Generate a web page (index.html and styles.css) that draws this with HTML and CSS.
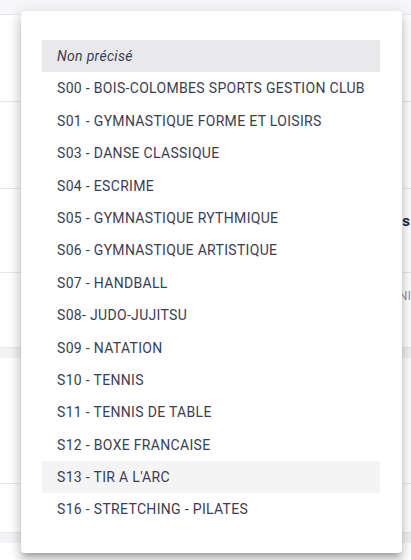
FILE: index.html
```html
<!DOCTYPE html>
<html lang="fr">
<head>
<meta charset="utf-8">
<link rel="stylesheet" href="styles.css">
</head>
<body>
<div class="page">
  <div class="topbar"></div>
  <div class="content">
    <div class="row r1"></div>
    <div class="row r2"></div>
    <div class="row r3"><span class="label">Classes</span></div>
    <div class="row r4"><span class="muted">NI</span></div>
    <div class="band"></div>
    <div class="row r5"></div>
    <div class="row r6"></div>
    <div class="band"></div>
  </div>
</div>
<div class="menu">
  <ul class="list">
    <li class="item selected"><em>Non précisé</em></li>
    <li class="item">S00 - BOIS-COLOMBES SPORTS GESTION CLUB</li>
    <li class="item">S01 - GYMNASTIQUE FORME ET LOISIRS</li>
    <li class="item">S03 - DANSE CLASSIQUE</li>
    <li class="item">S04 - ESCRIME</li>
    <li class="item">S05 - GYMNASTIQUE RYTHMIQUE</li>
    <li class="item">S06 - GYMNASTIQUE ARTISTIQUE</li>
    <li class="item">S07 - HANDBALL</li>
    <li class="item">S08- JUDO-JUJITSU</li>
    <li class="item">S09 - NATATION</li>
    <li class="item">S10 - TENNIS</li>
    <li class="item">S11 - TENNIS DE TABLE</li>
    <li class="item">S12 - BOXE FRANCAISE</li>
    <li class="item hover">S13 - TIR A L'ARC</li>
    <li class="item">S16 - STRETCHING - PILATES</li>
  </ul>
</div>
</body>
</html>
```

FILE: styles.css
```css
html, body {
  margin: 0;
  padding: 0;
  width: 411px;
  height: 560px;
  overflow: hidden;
  background: #ffffff;
  font-family: Roboto, "Noto Sans", sans-serif;
}
.page {
  position: relative;
  height: 560px;
}
.topbar {
  height: 14px;
  background: #f7f7f9;
  border-bottom: 1px solid #e6e6ee;
}
.row {
  border-bottom: 1px solid #e8e8ec;
  box-sizing: border-box;
}
.r1 { height: 87px; }
.r2 { height: 87px; }
.r3 { height: 84px; display: flex; align-items: center; justify-content: flex-end; }
.r4 { height: 75px; display: flex; align-items: flex-start; justify-content: flex-end; padding-top: 15px; }
.r5 { height: 126px; }
.r6 { height: 49px; }
.band { height: 10px; background: #f3f3f5; }
.label {
  font-weight: 700;
  font-size: 15px;
  color: #1f2340;
  margin-top: -20px;
  margin-right: 1px;
}
.muted {
  font-size: 13px;
  color: #9a9aa6;
  margin-right: 0;
}
.menu {
  position: absolute;
  left: 21px;
  top: 11px;
  width: 381px;
  height: 542px;
  background: #ffffff;
  border-radius: 4px;
  box-shadow: 0 5px 5px -3px rgba(0,0,0,0.2), 0 8px 10px 1px rgba(0,0,0,0.14), 0 3px 14px 2px rgba(0,0,0,0.12);
  box-sizing: border-box;
  padding: 29px 22px 0 21px;
}
.list {
  list-style: none;
  margin: 0;
  padding: 0;
}
.item {
  height: 32.4px;
  line-height: 32.4px;
  padding-left: 15px;
  font-size: 14px;
  letter-spacing: 0.32px;
  color: #3b3d52;
  white-space: nowrap;
}
.item em {
  font-style: italic;
}
.selected { background: #e9e9eb; }
.hover { background: #f4f4f5; }
```
